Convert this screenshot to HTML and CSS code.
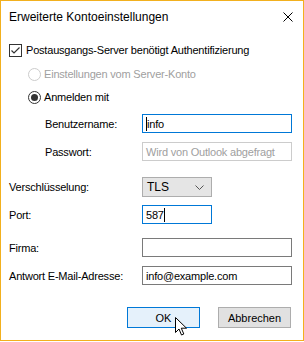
FILE: index.html
```html
<!DOCTYPE html>
<html lang="de">
<head>
<meta charset="UTF-8">
<meta name="viewport" content="width=device-width, initial-scale=1.0">
<title>Erweiterte Kontoeinstellungen</title>
<link rel="stylesheet" href="styles.css">
</head>
<body>
<div class="window">
  <div class="titlebar">
    <span class="title">Erweiterte Kontoeinstellungen</span>
    <svg class="close" width="10" height="10" viewBox="0 0 10 10">
      <path d="M0.5 0.5 L9.5 9.5 M9.5 0.5 L0.5 9.5" stroke="#000" stroke-width="1" fill="none"/>
    </svg>
  </div>

  <div class="content">
    <div class="row check-row">
      <span class="checkbox">
        <svg width="13" height="13" viewBox="0 0 13 13">
          <rect x="0.5" y="0.5" width="12" height="12" fill="#fff" stroke="#333"/>
          <path d="M2.5 6.5 L5 9 L10.5 3.5" stroke="#333" stroke-width="1.2" fill="none"/>
        </svg>
      </span>
      <span class="text">Postausgangs-Server benötigt Authentifizierung</span>
    </div>

    <div class="row radio-row first-radio">
      <span class="radio disabled"></span>
      <span class="text muted">Einstellungen vom Server-Konto</span>
    </div>

    <div class="row radio-row">
      <span class="radio checked"></span>
      <span class="text">Anmelden mit</span>
    </div>

    <div class="row field-row user-row">
      <label class="label indent">Benutzername:</label>
      <div class="input wide focused"><span class="caret"></span>info</div>
    </div>

    <div class="row field-row pass-row">
      <label class="label indent">Passwort:</label>
      <div class="input wide light placeholder">Wird von Outlook abgefragt</div>
    </div>

    <div class="row field-row enc-row">
      <label class="label">Verschlüsselung:</label>
      <div class="select">
        <span>TLS</span>
        <svg width="9" height="5" viewBox="0 0 9 5">
          <path d="M0.5 0.5 L4.5 4.5 L8.5 0.5" stroke="#555" fill="none"/>
        </svg>
      </div>
    </div>

    <div class="row field-row port-row">
      <label class="label">Port:</label>
      <div class="input short focused">587<span class="caret"></span></div>
    </div>

    <div class="row field-row firma-row">
      <label class="label">Firma:</label>
      <div class="input wide"></div>
    </div>

    <div class="row field-row reply-row">
      <label class="label">Antwort E-Mail-Adresse:</label>
      <div class="input wide">info@example.com</div>
    </div>

    <div class="buttons">
      <button class="btn primary">OK</button>
      <button class="btn">Abbrechen</button>
      <svg class="pointer" width="13" height="20" viewBox="0 0 13 20">
        <path d="M0.5 0.5 L0.5 15.5 L4 12 L6.5 18 L8.8 17 L6.3 11.2 L11.5 11.2 Z" fill="#fff" stroke="#000" stroke-width="1" stroke-linejoin="miter"/>
      </svg>
    </div>
  </div>
</div>
</body>
</html>
```

FILE: styles.css
```css
body {
    margin: 0;
    background-color: #fff;
}

.window {
    position: relative;
    width: 304px;
    height: 341px;
    box-sizing: border-box;
    border: 1px solid #f2b01e;
    background-color: #fff;
    font-family: "Liberation Sans", Arial, sans-serif;
    font-size: 11px;
    letter-spacing: -0.2px;
    color: #000;
}

.titlebar {
    height: 30px;
    display: flex;
    align-items: center;
    justify-content: space-between;
    padding: 0 9px 0 8px;
}

.title {
    font-family: "Liberation Sans", Arial, sans-serif;
    font-size: 12px;
    letter-spacing: 0;
    color: #000;
    margin-top: 1px;
}

.close {
    margin-right: 1px;
    margin-top: 1px;
}

.content {
    padding-left: 8px;
}

.row {
    display: flex;
    align-items: center;
}

.check-row {
    height: 20px;
    margin-top: 9px;
}

.checkbox {
    display: flex;
    width: 13px;
    height: 13px;
    margin-right: 4px;
}

.radio-row {
    height: 20px;
    margin-top: 3px;
    padding-left: 19px;
}

.first-radio {
    margin-top: 4px;
}

.radio {
    width: 13px;
    height: 13px;
    box-sizing: border-box;
    border: 1px solid #333;
    border-radius: 50%;
    margin-right: 3px;
    display: flex;
    align-items: center;
    justify-content: center;
}

.radio.disabled {
    border-color: #ccc;
}

.radio.checked::after {
    content: "";
    width: 7px;
    height: 7px;
    border-radius: 50%;
    background-color: #333;
}

.muted {
    color: #a0a0a0;
}

.field-row {
    height: 19px;
}

.label {
    width: 133px;
    flex-shrink: 0;
}

.label.indent {
    width: 97px;
    padding-left: 36px;
}

.user-row {
    margin-top: 7px;
}

.pass-row {
    margin-top: 9px;
}

.enc-row {
    height: 20px;
    margin-top: 16px;
}

.port-row {
    margin-top: 8px;
}

.firma-row {
    margin-top: 14px;
}

.reply-row {
    margin-top: 9px;
}

.input {
    height: 19px;
    box-sizing: border-box;
    border: 1px solid #7a7a7a;
    padding: 0 3px;
    display: flex;
    align-items: center;
    white-space: nowrap;
}

.input.wide {
    width: 150px;
}

.input.short {
    width: 70px;
}

.input.focused {
    border-color: #0078d7;
}

.input.light {
    border-color: #ccc;
}

.placeholder {
    color: #a0a0a0;
}

.caret {
    display: inline-block;
    width: 1px;
    height: 14px;
    background-color: #000;
}

.select {
    width: 70px;
    height: 20px;
    box-sizing: border-box;
    border: 1px solid #adadad;
    background-color: #e5e5e5;
    display: flex;
    align-items: center;
    justify-content: space-between;
    padding: 0 7px 0 4px;
    font-size: 12px;
    letter-spacing: 0;
}

.buttons {
    position: relative;
    display: flex;
    gap: 18px;
    margin-top: 22px;
    padding-left: 118px;
}

.btn {
    width: 73px;
    height: 21px;
    box-sizing: border-box;
    border: 1px solid #adadad;
    background-color: #e1e1e1;
    font-family: "Liberation Sans", Arial, sans-serif;
    font-size: 11px;
    color: #000;
    padding: 0;
}

.btn.primary {
    border-color: #0078d7;
    background-color: #e5f1fb;
}

.pointer {
    position: absolute;
    left: 166px;
    top: 10px;
}
```
